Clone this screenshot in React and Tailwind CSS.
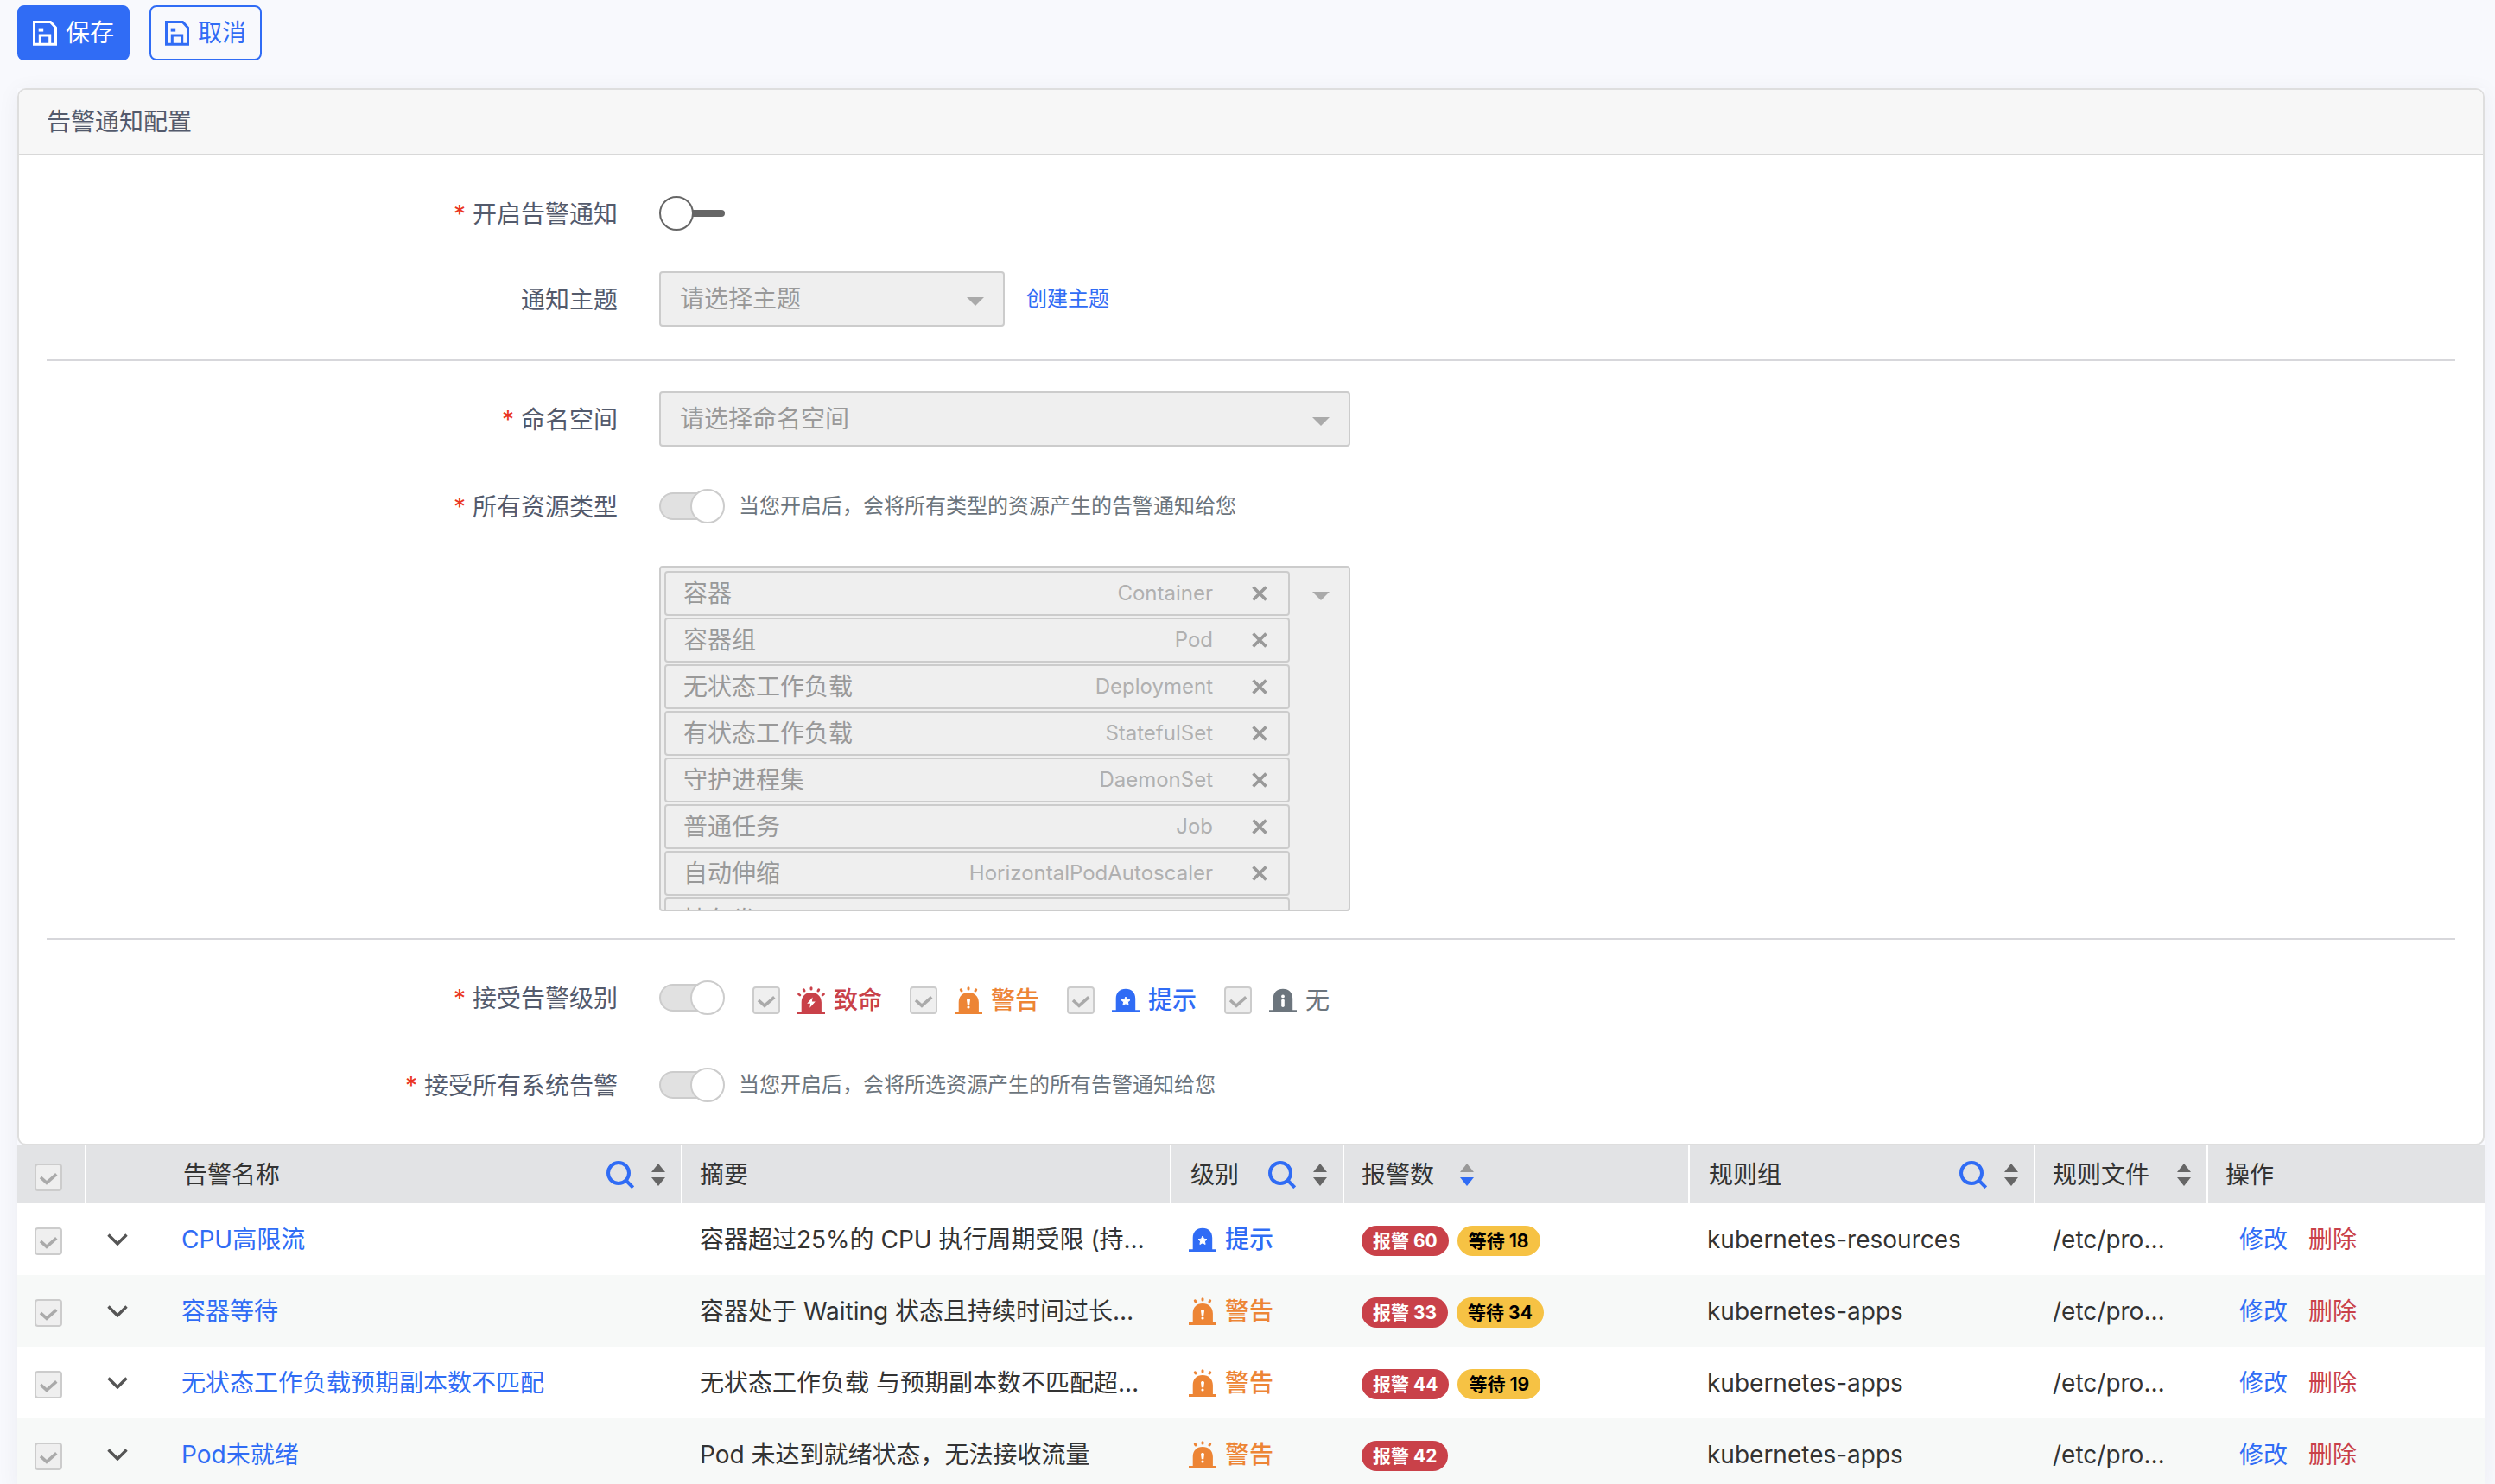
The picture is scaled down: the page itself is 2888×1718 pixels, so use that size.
import { useId } from 'react';

const resources = [
  ['容器', 'Container'],
  ['容器组', 'Pod'],
  ['无状态工作负载', 'Deployment'],
  ['有状态工作负载', 'StatefulSet'],
  ['守护进程集', 'DaemonSet'],
  ['普通任务', 'Job'],
  ['自动伸缩', 'HorizontalPodAutoscaler'],
  ['持久卷', 'PersistentVolume'],
];

const levels = {
  fatal: { text: '致命', style: 'text-[#c94149] font-medium' },
  warning: { text: '警告', style: 'text-[#ed8535] font-medium' },
  info: { text: '提示', style: 'text-[#306cf5] font-medium' },
  none: { text: '无', style: 'text-[#6c757d]' },
};

const rows = [
  { name: 'CPU高限流', summary: '容器超过25%的 CPU 执行周期受限 (持…', level: 'info', firing: 60, pending: 18, group: 'kubernetes-resources' },
  { name: '容器等待', summary: '容器处于 Waiting 状态且持续时间过长…', level: 'warning', firing: 33, pending: 34, group: 'kubernetes-apps' },
  { name: '无状态工作负载预期副本数不匹配', summary: '无状态工作负载 与预期副本数不匹配超…', level: 'warning', firing: 44, pending: 19, group: 'kubernetes-apps' },
  { name: 'Pod未就绪', summary: 'Pod 未达到就绪状态，无法接收流量', level: 'warning', firing: 42, group: 'kubernetes-apps' },
];

function SaveIcon() {
  return (
    <svg viewBox="0 0 28 29" className="h-[29px] w-7" fill="none" stroke="currentColor" strokeWidth="3" aria-hidden="true">
      <path d="M1.5 1.5H20.5L26.5 8V27.2H1.5Z" />
      <path d="M8.3 27V17H19.7V27" />
      <path d="M6.7 10.6H12.2" strokeWidth="4" />
    </svg>
  );
}

function Siren({ level }) {
  const tall = level === 'fatal' || level === 'warning';
  return (
    <svg viewBox="0 0 32 32" className="size-8 shrink-0" fill="currentColor" aria-hidden="true">
      {tall ? (
        <path d="M0 29H4.7V18.5C4.7 11.5 9 7 16 7S27.9 11.5 27.9 18.5V29H32V32H0Z" />
      ) : (
        <path d="M0 27.2H4.7V14C4.7 7 9 2.7 16 2.7S27.2 7 27.2 14V27.2H32V30H0Z" />
      )}
      {tall && (
        <g stroke="currentColor" strokeWidth="3" strokeLinecap="round">
          <path d="M16 1.8V3M7.3 3.8L8 5M24.7 3.8L24 5" />
          {level === 'fatal' && <path d="M1.5 8.9L2.9 10M30.5 8.9L29.1 10" strokeWidth="2.6" />}
        </g>
      )}
      {level === 'fatal' && <path fill="#fff" d="M17.6 12.5L11.2 19.7H15L14.3 24.8L20.8 17.4H16.9Z" />}
      {level === 'warning' && (
        <g fill="#fff">
          <path d="M14 15.5C14 13.4 18 13.4 18 15.5L17.2 21.2H14.8Z" />
          <circle cx="16" cy="24" r="1.6" />
        </g>
      )}
      {level === 'info' && (
        <path fill="#fff" stroke="#fff" strokeLinejoin="round" d="M16 12L17.5 15.2L21 15.7L18.4 18L19.1 21.5L16 19.8L12.9 21.5L13.6 18L11 15.7L14.5 15.2Z" />
      )}
      {level === 'none' && (
        <g fill="#fff">
          <circle cx="16" cy="11.4" r="1.9" />
          <rect x="14.2" y="14.5" width="3.6" height="9.5" rx="1.8" />
        </g>
      )}
    </svg>
  );
}

function Caret() {
  return (
    <svg viewBox="0 0 20 10" className="h-2.5 w-5 fill-[#aaa]" aria-hidden="true">
      <path d="M0 0H20L10 10Z" />
    </svg>
  );
}

function Cross() {
  return (
    <svg viewBox="0 0 18 18" className="size-[18px]" fill="none" stroke="currentColor" strokeWidth="3.6" aria-hidden="true">
      <path d="M1.5 1.5L16.5 16.5M16.5 1.5L1.5 16.5" />
    </svg>
  );
}

function SearchIcon() {
  return (
    <svg viewBox="0 0 32 32" className="size-8" fill="none" stroke="currentColor" strokeWidth="4" aria-hidden="true">
      <circle cx="14" cy="14" r="12" />
      <path d="M22.5 22.5L30.7 30.7" />
    </svg>
  );
}

function SortIcon({ desc }) {
  return (
    <svg viewBox="0 0 16 26" className="h-[26px] w-4 fill-[#666]" aria-hidden="true">
      <path d="M0 10L8 0L16 10Z" className={desc ? 'fill-[#999]' : ''} />
      <path d="M0 16H16L8 26Z" className={desc ? 'fill-[#306cf5]' : ''} />
    </svg>
  );
}

function Tick({ id, label }) {
  return (
    <span className="grid size-8 shrink-0">
      <input id={id} type="checkbox" defaultChecked disabled aria-label={label} className="col-start-1 row-start-1 size-8 appearance-none rounded border-2 border-[#ccc] bg-[#efefef]" />
      <svg viewBox="0 0 32 32" className="pointer-events-none col-start-1 row-start-1 size-8" fill="none" stroke="#aaa" strokeWidth="3.6" aria-hidden="true">
        <path d="M7 16L14 22.4L25.3 12.4" />
      </svg>
    </span>
  );
}

function Toggle({ id, off }) {
  return off ? (
    <input
      id={id}
      type="checkbox"
      role="switch"
      className="relative h-10 w-[76px] shrink-0 appearance-none before:absolute before:inset-y-4 before:right-0 before:left-5 before:rounded-full before:bg-[#666] after:absolute after:left-0 after:size-10 after:rounded-full after:border-2 after:border-[#666] after:bg-white"
    />
  ) : (
    <input
      id={id}
      type="checkbox"
      role="switch"
      defaultChecked
      disabled
      className="relative h-10 w-[76px] shrink-0 appearance-none before:absolute before:inset-y-1 before:right-1 before:left-0 before:rounded-full before:border-2 before:border-[#ccc] before:bg-[#e1e1e1] after:absolute after:right-0 after:size-10 after:rounded-full after:border-2 after:border-[#ccc] after:bg-white"
    />
  );
}

function Field({ label, required, htmlFor, children }) {
  return (
    <div className="grid min-h-16 grid-cols-[25%_1fr] items-center">
      {label ? (
        <label htmlFor={htmlFor} className="flex justify-end gap-2 pt-0.5 pr-9">
          {required && <span className="text-[#ea3323]">*</span>}
          {label}
        </label>
      ) : (
        <span />
      )}
      <div className="flex items-center pl-3">{children}</div>
    </div>
  );
}

function SelectBox({ id, placeholder, width }) {
  return (
    <div className={`grid items-center ${width}`}>
      <select id={id} disabled className="col-start-1 row-start-1 h-16 w-full appearance-none rounded border-2 border-[#ccc] bg-[#efefef] px-[22px] text-[#999] opacity-100">
        <option>{placeholder}</option>
      </select>
      <span className="pointer-events-none col-start-1 row-start-1 justify-self-end pt-1.5 pr-6">
        <Caret />
      </span>
    </div>
  );
}

function Hint({ children }) {
  return <span className="ml-4 text-[24px] text-[#6c757d]">{children}</span>;
}

function Head({ title, search, sort, desc, spread, last }) {
  return (
    <th scope="col" className={`pr-5 text-left font-normal ${search ? 'pl-[22px]' : 'pl-5'} ${last ? '' : 'border-r-2 border-white'}`}>
      <div className={`flex items-center ${spread ? '-mr-0.5 justify-between' : 'gap-[30px]'}`}>
        <span>{title}</span>
        <div className="flex items-center gap-5">
          {search && (
            <button type="button" aria-label={`搜索${title}`} className="text-[#306cf5]">
              <SearchIcon />
            </button>
          )}
          {sort && (
            <button type="button" aria-label={`排序${title}`}>
              <SortIcon desc={desc} />
            </button>
          )}
        </div>
      </div>
    </th>
  );
}

export default function App() {
  const id = useId();
  return (
    <div className="h-screen overflow-y-auto bg-[#f8f9fd] pt-1.5 pr-3 pl-5 font-['Inter','Noto_Sans_CJK_SC',sans-serif] text-[28px] leading-[42px] text-[#535a6c] [scrollbar-width:none]">
      <div className="flex gap-[23px]">
        <button type="button" className="flex h-16 items-center gap-2.5 rounded-lg border-2 border-[#306cf5] bg-[#306cf5] px-4 text-white">
          <SaveIcon />
          保存
        </button>
        <button type="button" className="flex h-16 items-center gap-2.5 rounded-lg border-2 border-[#306cf5] px-4 text-[#306cf5]">
          <SaveIcon />
          取消
        </button>
      </div>

      <div className="mt-8 shadow-[0_4px_24px_rgba(30,30,60,0.06)]">
        <section className="rounded-[10px] border-2 border-[#dedede] bg-white">
          <h2 className="rounded-t-lg border-b-2 border-[#d8d8d8] bg-[#f7f7f7] px-8 py-4">告警通知配置</h2>
          <form className="px-8">
            <div className="flex flex-col gap-[35px] pt-[35px] pb-[38px]">
              <Field label="开启告警通知" required htmlFor={id + 'on'}>
                <Toggle id={id + 'on'} off />
              </Field>
              <Field label="通知主题" htmlFor={id + 'topic'}>
                <SelectBox id={id + 'topic'} placeholder="请选择主题" width="w-[400px]" />
                <a href="#topic" className="ml-[25px] text-[24px] text-[#306cf5]">创建主题</a>
              </Field>
            </div>
            <div className="flex flex-col gap-[37px] border-y-2 border-[#d7d7db] pt-[35px] pb-[31px]">
              <Field label="命名空间" required htmlFor={id + 'ns'}>
                <SelectBox id={id + 'ns'} placeholder="请选择命名空间" width="w-[800px]" />
              </Field>
              <Field label="所有资源类型" required htmlFor={id + 'all'}>
                <Toggle id={id + 'all'} />
                <Hint>当您开启后，会将所有类型的资源产生的告警通知给您</Hint>
              </Field>
              <Field>
                <div className="flex h-[400px] w-[800px] items-start gap-[26px] overflow-hidden rounded border-2 border-[#ccc] bg-[#efefef] pt-1 pr-[22px] pl-1 text-[#999]">
                  <ul className="flex flex-1 flex-col gap-0.5">
                    {resources.map(([zh, en]) => (
                      <li key={en} className="flex h-[52px] items-center rounded border-2 border-[#ccc] pr-6 pl-5">
                        <span className="flex-1">{zh}</span>
                        <span className="text-[24px] text-[#b0b0b0]">{en}</span>
                        <button type="button" disabled aria-label={`移除${zh}`} className="ml-[45px]">
                          <Cross />
                        </button>
                      </li>
                    ))}
                  </ul>
                  <span className="pt-6">
                    <Caret />
                  </span>
                </div>
              </Field>
            </div>
            <div className="flex flex-col gap-[37px] pt-[35px] pb-9">
              <Field label="接受告警级别" required htmlFor={id + 'lv'}>
                <Toggle id={id + 'lv'} />
                <div className="flex gap-8 pt-1.5 pl-8">
                  {Object.entries(levels).map(([key, l]) => (
                    <div key={key} className="flex items-center gap-5">
                      <Tick id={id + key} />
                      <label htmlFor={id + key} className={`flex items-center gap-2.5 ${l.style}`}>
                        <Siren level={key} />
                        {l.text}
                      </label>
                    </div>
                  ))}
                </div>
              </Field>
              <Field label="接受所有系统告警" required htmlFor={id + 'sys'}>
                <Toggle id={id + 'sys'} />
                <Hint>当您开启后，会将所选资源产生的所有告警通知给您</Hint>
              </Field>
            </div>
          </form>
        </section>

        <table className="w-full table-fixed border-separate border-spacing-0 bg-white text-[#333]">
          <colgroup>
            <col className="w-20" />
            <col className="w-[90px]" />
            <col className="w-[600px]" />
            <col className="w-[566px]" />
            <col className="w-[200px]" />
            <col className="w-[400px]" />
            <col className="w-[400px]" />
            <col className="w-[200px]" />
            <col />
          </colgroup>
          <thead>
            <tr className="h-[67px] bg-[#e2e3e5]">
              <th scope="col" className="border-r-2 border-white pt-1.5 pl-5">
                <Tick label="全选" />
              </th>
              <td />
              <Head title="告警名称" search sort spread />
              <Head title="摘要" />
              <Head title="级别" search sort spread />
              <Head title="报警数" sort desc />
              <Head title="规则组" search sort spread />
              <Head title="规则文件" sort spread />
              <Head title="操作" last />
            </tr>
          </thead>
          <tbody>
            {rows.map((r) => (
              <tr key={r.name} className="h-[83px] even:bg-[#f7f9f8]">
                <td className="pt-1 pl-5">
                  <Tick label={r.name} />
                </td>
                <td className="pl-6">
                  <button type="button" aria-label={`展开${r.name}`} className="block">
                    <svg viewBox="0 0 24 14" className="h-3.5 w-6" fill="none" stroke="#555" strokeWidth="3.4" aria-hidden="true">
                      <path d="M1.5 1.5L12 12L22.5 1.5" />
                    </svg>
                  </button>
                </td>
                <td className="px-5">
                  <a href="#rule" className="text-[#306cf5]">{r.name}</a>
                </td>
                <td className="overflow-hidden px-5 whitespace-nowrap">{r.summary}</td>
                <td className="px-5">
                  <div className={`flex items-center gap-2.5 ${levels[r.level].style}`}>
                    <Siren level={r.level} />
                    {levels[r.level].text}
                  </div>
                </td>
                <td className="px-5">
                  <div className="flex gap-2.5 pt-1 text-[21px] leading-[35px] font-bold">
                    <span className="rounded-full bg-[#c94149] px-[13px] text-white">报警 {r.firing}</span>
                    {r.pending && <span className="rounded-full bg-[#f6c244] px-[13px] text-black">等待 {r.pending}</span>}
                  </div>
                </td>
                <td className="px-5">{r.group}</td>
                <td className="px-5">/etc/pro…</td>
                <td className="px-9">
                  <div className="flex gap-6">
                    <button type="button" className="text-[#306cf5]">修改</button>
                    <button type="button" className="text-[#c94149]">删除</button>
                  </div>
                </td>
              </tr>
            ))}
          </tbody>
        </table>
      </div>
    </div>
  );
}
